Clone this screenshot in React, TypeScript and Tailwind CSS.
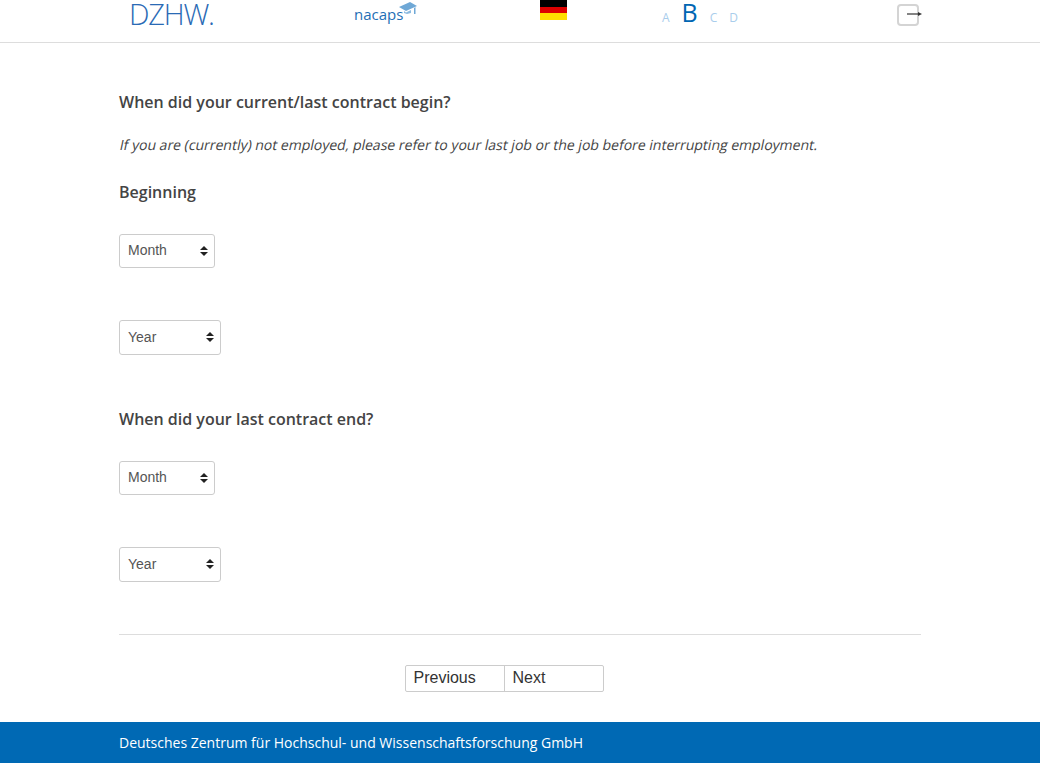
const SelectBox = ({ label, width, height }: { label: string; width: string; height: string }) => (
  <div className={`flex items-center justify-between rounded-[3px] border border-[#cccccc] bg-white pb-px pl-2 pr-[5px] font-['Liberation_Sans',sans-serif] text-[14px] text-[#555555] ${width} ${height}`}>
    <span>{label}</span>
    <svg width="10" height="12" viewBox="0 0 10 12" className="fill-[#222222]">
      <path d="M1 5 L5 1 L9 5 Z" />
      <path d="M1 7 L5 11 L9 7 Z" />
    </svg>
  </div>
);

const DateFields = () => (
  <div className="flex flex-col items-start">
    <SelectBox label="Month" width="w-[96px]" height="h-[34px]" />
    <div className="mt-[52px]">
      <SelectBox label="Year" width="w-[102px]" height="h-[35px]" />
    </div>
  </div>
);

const App = () => {
  return (
    <div className="flex h-[763px] flex-col bg-white font-['Open_Sans',sans-serif] text-[#444444]">
      <header className="h-[43px] shrink-0 border-b border-[#dddddd]">
        <div className="mx-auto flex h-[42px] w-[802px]">
          <div className="ml-[10px] h-[27px] w-[224px] shrink-0 text-[29px] leading-[27px] font-light tracking-[-1.2px] text-[#2a6ab5]">
            DZHW.
          </div>
          <div className="relative h-[28px] w-[187px] shrink-0 pl-px text-[15px] leading-[28px] text-[#1f6fb5]">
            nacaps
            <svg width="18" height="13" viewBox="0 0 18 13" className="absolute left-[46px] top-[2px]">
              <path d="M0 5 L11 0 L18 4 L7 9 Z" fill="#6fa8d6" />
              <path d="M5 9 L7 10.5 L12 8 L12 11 L8 12 L5 11 Z" fill="#8dbbe0" />
              <path d="M15 6 L16.5 5 L16.5 12 L15 12 Z" fill="#6fa8d6" />
            </svg>
          </div>
          <div className="flex h-5 w-[27px] shrink-0 flex-col">
            <div className="h-[7px] bg-black" />
            <div className="h-[6px] bg-[#dd0000]" />
            <div className="h-[7px] bg-[#ffdd00]" />
          </div>
          <div className="ml-[95px] flex h-[24px] w-[77px] shrink-0 items-baseline text-[#a9cdec]">
            <span className="text-[12px]">A</span>
            <span className="ml-[12px] text-[25px] leading-[24px] text-[#0066b3]">B</span>
            <span className="ml-[12px] text-[12px]">C</span>
            <span className="ml-[12px] text-[12px]">D</span>
          </div>
          <div className="relative ml-[158px] mt-[4px] h-[22px] w-[22px] shrink-0 rounded-[4px] border-2 border-[#d4d4d4]">
            <svg width="16" height="6" viewBox="0 0 16 6" className="absolute left-[8px] top-[5px]">
              <path d="M0 3 H12" stroke="#333333" strokeWidth="1.2" />
              <path d="M11 1 L15 3 L11 5 Z" fill="#333333" />
            </svg>
          </div>
        </div>
      </header>

      <main className="mx-auto w-[802px] grow">
        <h2 className="mt-[48px] text-[16px] leading-[22px] font-semibold">When did your current/last contract begin?</h2>
        <p className="mt-[22px] origin-left -skew-x-12 pl-px text-[14px] leading-[20px]">
          If you are (currently) not employed, please refer to your last job or the job before interrupting employment.
        </p>
        <h3 className="mt-[26px] mb-[31px] text-[16px] leading-[22px] font-semibold">Beginning</h3>
        <DateFields />
        <h2 className="mt-[53px] mb-[31px] text-[16px] leading-[22px] font-semibold">When did your last contract end?</h2>
        <DateFields />
        <hr className="mt-[52px] border-t border-[#dddddd]" />
        <div className="mt-[30px] flex justify-center pr-[32px]">
          <div className="flex h-[27px] w-[199px] rounded-[2px] border border-[#cccccc] font-['Liberation_Sans',sans-serif] text-[16px] leading-[23px] text-[#333333]">
            <div className="w-[99px] border-r border-[#cccccc] pl-2">Previous</div>
            <div className="pl-2">Next</div>
          </div>
        </div>
      </main>

      <footer className="h-[41px] shrink-0 bg-[#0069b4]">
        <div className="mx-auto w-[802px] text-[14px] leading-[41px] text-white">
          Deutsches Zentrum für Hochschul- und Wissenschaftsforschung GmbH
        </div>
      </footer>
    </div>
  );
};

export default App;
